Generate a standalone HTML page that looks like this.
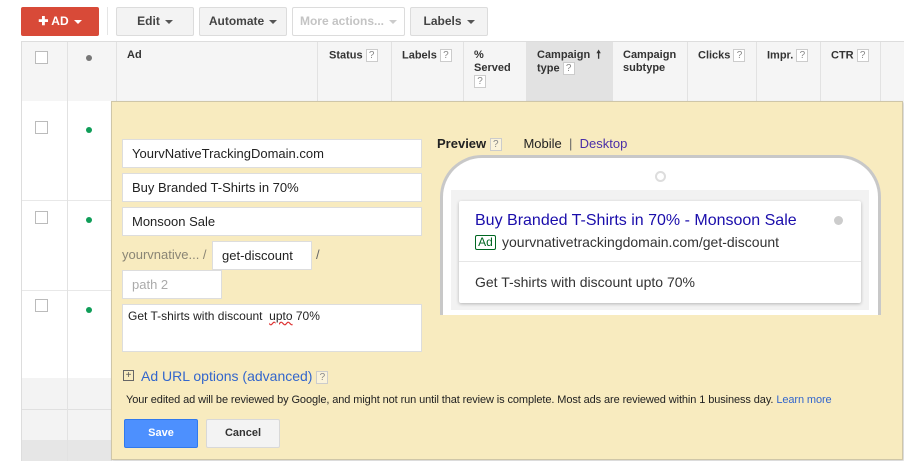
<!DOCTYPE html>
<html><head><meta charset="utf-8"><style>
*{box-sizing:border-box;margin:0;padding:0}
body{width:904px;height:461px;overflow:hidden;background:#fff;font-family:"Liberation Sans",Arial,sans-serif;font-size:13px;color:#222;position:relative}
.a{position:absolute}
.btn{position:absolute;top:7px;height:29px;border:1px solid #dcdcdc;border-radius:2px;background:#f3f3f3;font-size:12px;font-weight:bold;color:#444;text-align:center;line-height:27px}
.tri{display:inline-block;width:0;height:0;border-left:4px solid transparent;border-right:4px solid transparent;border-top:4px solid #555;vertical-align:middle;margin-left:5px}
.q{display:inline-block;width:12px;height:13px;border:1px solid #ccc;background:#fff;color:#888;font-size:10px;line-height:11px;text-align:center;font-weight:normal;vertical-align:middle}
.th{position:absolute;top:49px;font-size:11px;font-weight:bold;color:#333;line-height:13px}
.vl{position:absolute;width:1px;background:#e2e2e2}
.cb{position:absolute;left:35px;width:13px;height:13px;border:1px solid #bbb;background:#fff}
.dot{position:absolute;left:86px;width:6px;height:6px;border-radius:50%;background:#0f9d58}
.inp{position:absolute;background:#fff;border:1px solid #ddd;font-size:13px;color:#222;padding-left:9px;line-height:27px;height:29px}
</style></head><body>
<div class="a" style="left:21px;top:7px;width:78px;height:29px;background:#d84a38;border-radius:2px;color:#fff;font-weight:bold;font-size:12px;line-height:29px;text-align:center">✚ AD<span class="tri" style="border-top-color:#fff"></span></div>
<div class="a" style="left:107px;top:7px;width:1px;height:28px;background:#e5e5e5"></div>
<div class="btn" style="left:116px;width:78px">Edit<span class="tri"></span></div>
<div class="btn" style="left:199px;width:88px">Automate<span class="tri"></span></div>
<div class="btn" style="left:292px;width:113px;background:#fff;color:#c4c4c4">More actions...<span class="tri" style="border-top-color:#ccc"></span></div>
<div class="btn" style="left:410px;width:78px">Labels<span class="tri"></span></div>

<div class="a" style="left:21px;top:41px;width:883px;height:60px;background:#f5f5f5;border-top:1px solid #ddd;border-left:1px solid #ddd"></div>
<div class="a" style="left:526px;top:42px;width:86px;height:59px;background:#e2e2e2"></div>
<div class="a" style="left:21px;top:101px;width:1px;height:360px;background:#ddd"></div>
<div class="a" style="left:22px;top:378px;width:90px;height:62px;background:#f3f3f3"></div>
<div class="a" style="left:22px;top:440px;width:90px;height:21px;background:#e6e6e6"></div>
<div class="a" style="left:22px;top:200px;width:90px;height:1px;background:#e8e8e8"></div>
<div class="a" style="left:22px;top:290px;width:90px;height:1px;background:#e8e8e8"></div>
<div class="a" style="left:22px;top:409px;width:90px;height:1px;background:#e0e0e0"></div>
<div class="vl" style="left:67px;top:42px;height:419px"></div>
<div class="vl" style="left:116px;top:42px;height:59px"></div>
<div class="vl" style="left:317px;top:42px;height:59px"></div>
<div class="vl" style="left:391px;top:42px;height:59px"></div>
<div class="vl" style="left:463px;top:42px;height:59px"></div>
<div class="vl" style="left:612px;top:42px;height:59px"></div>
<div class="vl" style="left:687px;top:42px;height:59px"></div>
<div class="vl" style="left:756px;top:42px;height:59px"></div>
<div class="vl" style="left:820px;top:42px;height:59px"></div>
<div class="vl" style="left:880px;top:42px;height:59px"></div>
<div class="cb" style="top:51px"></div>
<div class="a" style="left:86px;top:55px;width:6px;height:6px;border-radius:50%;background:#777"></div>
<div class="th" style="left:127px">Ad</div>
<div class="th" style="left:329px">Status <span class="q">?</span></div>
<div class="th" style="left:402px">Labels <span class="q">?</span></div>
<div class="th" style="left:474px">%<br>Served<br><span class="q">?</span></div>
<div class="th" style="left:537px">Campaign &nbsp;🠕<br>type <span class="q">?</span></div>
<div class="th" style="left:623px">Campaign<br>subtype</div>
<div class="th" style="left:698px">Clicks <span class="q">?</span></div>
<div class="th" style="left:767px">Impr. <span class="q">?</span></div>
<div class="th" style="left:831px">CTR <span class="q">?</span></div>
<div class="cb" style="top:121px"></div><div class="dot" style="top:127px"></div>
<div class="cb" style="top:211px"></div><div class="dot" style="top:217px"></div>
<div class="cb" style="top:299px"></div><div class="dot" style="top:307px"></div>

<div class="a" style="left:111px;top:101px;width:792px;height:359px;background:#f8ebbf;border:1px solid #cfc6a8;box-shadow:1px 1px 2px rgba(0,0,0,.2)"></div>
<div class="inp" style="left:122px;top:139px;width:300px">YourvNativeTrackingDomain.com</div>
<div class="inp" style="left:122px;top:173px;width:300px">Buy Branded T-Shirts in 70%</div>
<div class="inp" style="left:122px;top:207px;width:300px">Monsoon Sale</div>
<div class="a" style="left:122px;top:247px;color:#8a8575;font-size:13px">yourvnative... /</div>
<div class="inp" style="left:212px;top:241px;width:100px">get-discount</div>
<div class="a" style="left:316px;top:247px;color:#666">/</div>
<div class="inp" style="left:122px;top:270px;width:100px;color:#aaa">path 2</div>
<div class="a" style="left:122px;top:304px;width:300px;height:48px;background:#fff;border:1px solid #ddd;font-size:12px;padding:4px 5px">Get T-shirts with discount &nbsp;<span style="text-decoration:underline wavy #d33">upto</span> 70%</div>
<div class="a" style="left:123px;top:370px;width:11px;height:11px;border:1px solid #666;font-size:10px;line-height:9px;text-align:center;color:#555">+</div>
<div class="a" style="left:141px;top:368px;color:#3366cc;font-size:14px">Ad URL options (advanced) <span class="q" style="background:#fbf3da">?</span></div>
<div class="a" style="left:126px;top:394px;font-size:11px;color:#222;letter-spacing:-0.1px">Your edited ad will be reviewed by Google, and might not run until that review is complete. Most ads are reviewed within 1 business day. <span style="color:#3366cc">Learn more</span></div>
<div class="a" style="left:124px;top:419px;width:74px;height:29px;background:#4d90fe;border:1px solid #3079ed;border-radius:2px;color:#fff;font-weight:bold;font-size:11px;text-align:center;line-height:27px">Save</div>
<div class="a" style="left:206px;top:419px;width:74px;height:29px;background:#f3f3f3;border:1px solid #d8d8d8;border-radius:2px;color:#333;font-weight:bold;font-size:11px;text-align:center;line-height:27px">Cancel</div>

<div class="a" style="left:437px;top:136px;font-size:13px"><b>Preview</b> <span class="q" style="background:#fbf3da">?</span> &nbsp; &nbsp; &nbsp;Mobile &nbsp;<span style="color:#666">|</span> &nbsp;<span style="color:#4a2ea8">Desktop</span></div>
<div class="a" style="left:440px;top:155px;width:441px;height:160px;background:#fff;border:3px solid #c8c8c8;border-bottom:none;border-radius:42px 42px 0 0"></div>
<div class="a" style="left:655px;top:171px;width:11px;height:11px;border:2px solid #ddd;border-radius:50%"></div>
<div class="a" style="left:451px;top:190px;width:418px;height:120px;background:#f2f2f2"></div>
<div class="a" style="left:459px;top:201px;width:402px;height:102px;background:#fff;border-radius:2px;box-shadow:0 1px 3px rgba(0,0,0,.25)"></div>
<div class="a" style="left:475px;top:212px;color:#1a0dab;font-size:16px">Buy Branded T-Shirts in 70% - Monsoon Sale</div>
<div class="a" style="left:834px;top:216px;width:9px;height:9px;border-radius:50%;background:#ccc"></div>
<div class="a" style="left:475px;top:235px;width:21px;height:15px;border:1px solid #006621;color:#006621;font-size:12px;line-height:13px;text-align:center;border-radius:2px">Ad</div>
<div class="a" style="left:502px;top:234px;color:#333;font-size:14px">yourvnativetrackingdomain.com/get-discount</div>
<div class="a" style="left:459px;top:261px;width:402px;height:1px;background:#e6e6e6"></div>
<div class="a" style="left:475px;top:274px;color:#333;font-size:14px">Get T-shirts with discount upto 70%</div>
</body></html>
